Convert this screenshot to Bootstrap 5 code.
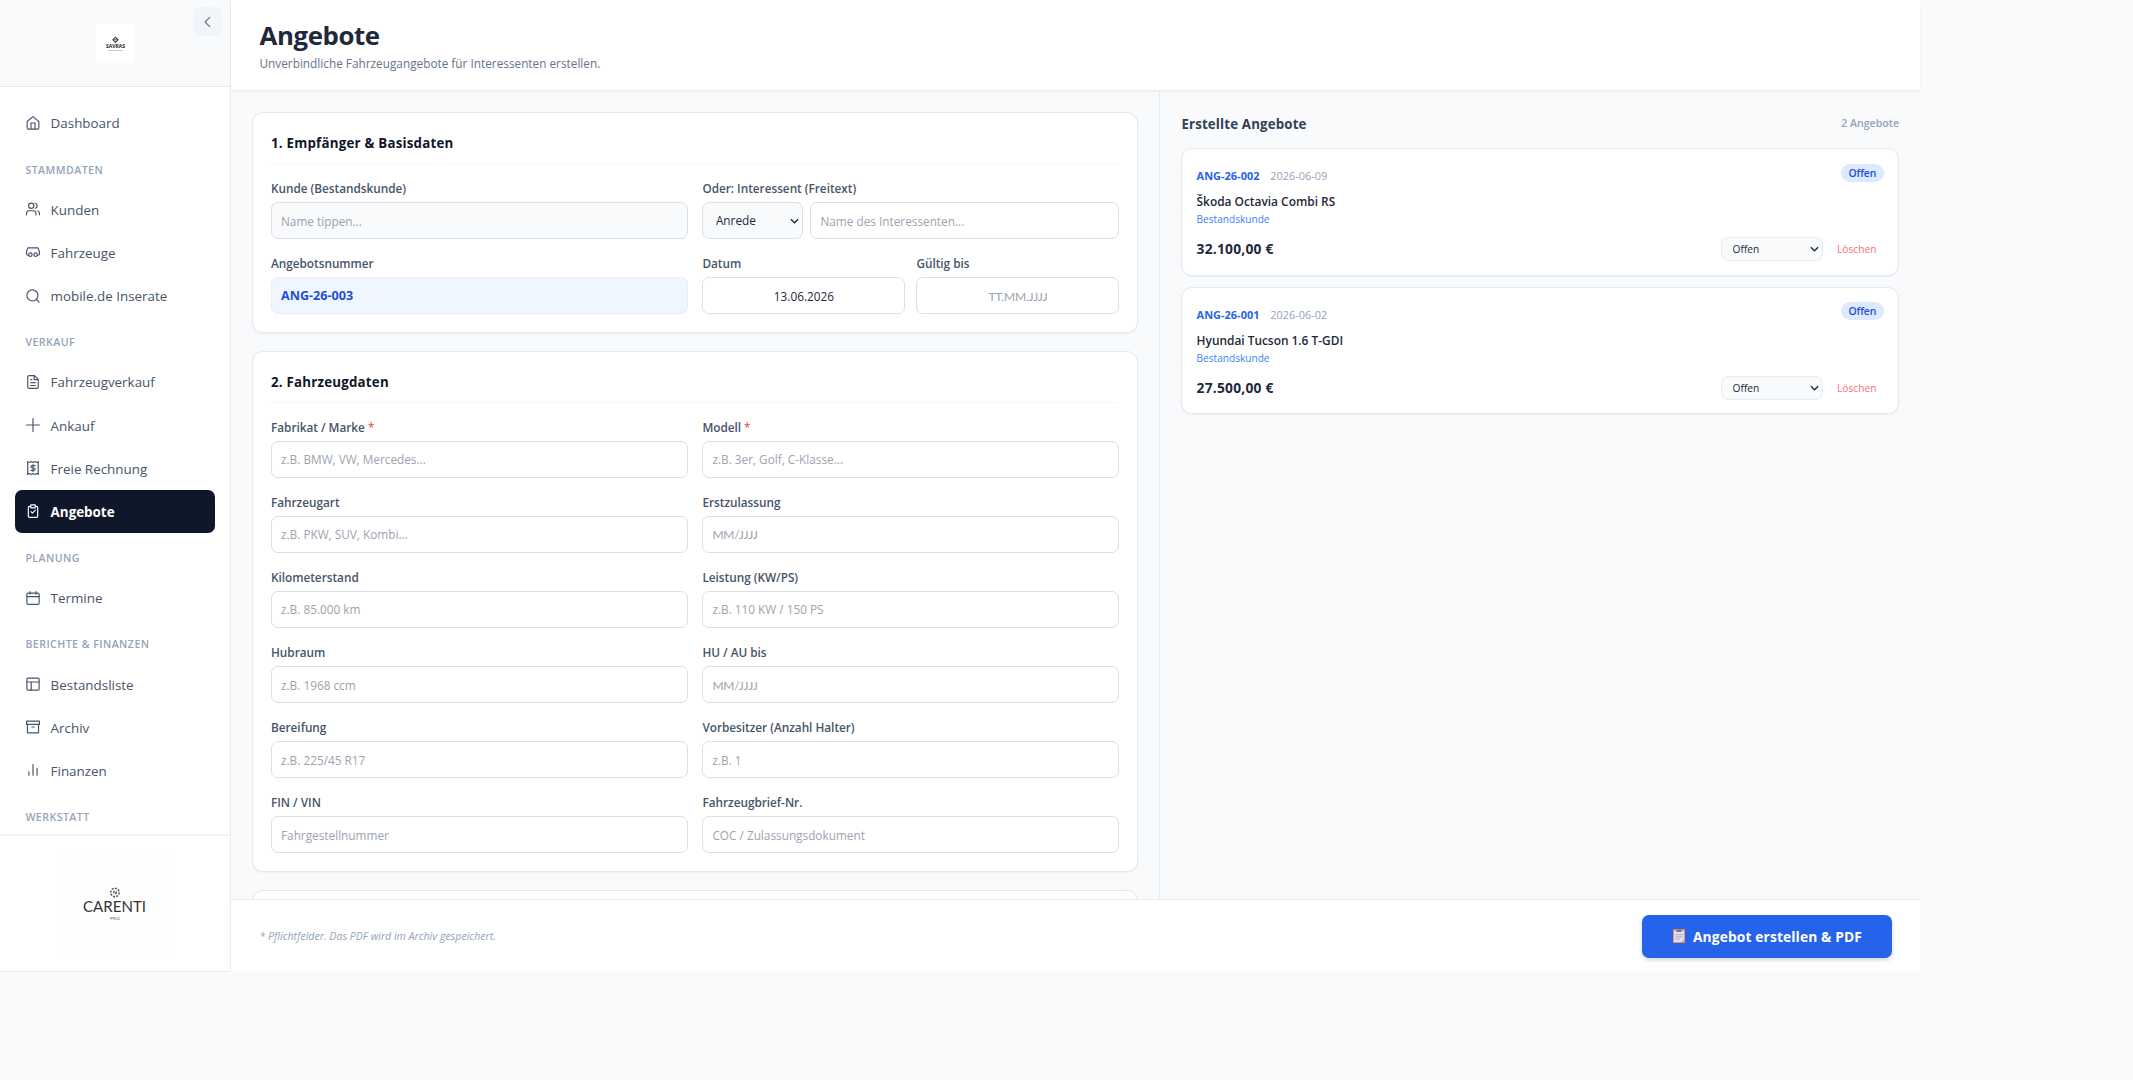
<!DOCTYPE html>
<html lang="de">
<head>
  <meta charset="UTF-8" />
  <meta name="viewport" content="width=device-width, initial-scale=1.0" />
  <title>Angebote</title>
  <link href="https://cdn.jsdelivr.net/npm/bootstrap@5.3.3/dist/css/bootstrap.min.css" rel="stylesheet">
  <style>
    body {
      font-family: 'Open Sans', 'Noto Sans', sans-serif;
      font-size: 12.6px;
      line-height: 18px;
      color: #1e293b;
      background: #f8fafc;
      overflow: hidden;
    }

    .app-shell { width: 1920px; height: 972px; }

    /* Sidebar */
    .side-panel { width: 231px; border-right: 1px solid #e8edf3; border-bottom: 1px solid #e8edf3; }
    .side-top { height: 87px; background: #f8fafc; border-bottom: 1px solid #e2e8f0; }
    .brand-tile { width: 39px; height: 39px; }
    .collapse-btn {
      top: 7px; right: 8px; width: 29px; height: 29px;
      background: #f1f5f9; border-radius: 7px; color: #64748b;
    }
    .side-nav { padding: 14.4px 14.6px 0 14.8px; overflow: hidden; }
    .side-item {
      height: 43.2px; padding: 1px 11px 0; gap: 10.8px;
      font-size: 13.4px; color: #475569; text-decoration: none; border-radius: 7px;
    }
    .side-item svg { width: 14px; height: 14px; margin-top: -1px; }
    .side-item.current { background: #0f172a; color: #fff; font-weight: 700; font-size: 13.4px; }
    .side-head {
      height: 43.1px; padding: 16px 10.6px 0;
      font-size: 10.6px; font-weight: 600; letter-spacing: .45px; color: #94a3b8;
    }
    .side-foot { height: 137px; border-top: 2px solid #f1f5f9; }
    .foot-logo { width: 108px; height: 108px; background: #fefefe; }
    .icon { fill: none; stroke: currentColor; stroke-width: 2; stroke-linecap: round; stroke-linejoin: round; flex: none; }

    /* Page header */
    .page-head { height: 91px; padding: 18px 28.5px 0; border-bottom: 1px solid #e8edf3; box-shadow: 0 1px 2px rgba(15, 23, 42, .05); z-index: 1; }
    .page-head h1 { font-size: 25.8px; line-height: 35px; font-weight: 700; letter-spacing: -.4px; }
    .page-head p { font-size: 11.8px; line-height: 20px; color: #64748b; }

    /* Form column */
    .form-col { width: 929px; padding: 21.4px 21px 0 21.4px; border-right: 1px solid #e8edf3; overflow: hidden; }
    .panel { background: #fff; border: 1px solid #e5eaf1; border-radius: 11px; box-shadow: 0 1px 2px rgba(15, 23, 42, .05); }
    .form-panel { padding: 17.6px 17.6px 17.2px; margin-bottom: 18.6px; }
    .panel-title { font-size: 13.3px; line-height: 24px; font-weight: 700; letter-spacing: .22px; color: #0f172a; padding-bottom: 8.4px; margin-bottom: 14.8px; border-bottom: 1px solid #f5f8fb; }
    .field-grid { display: grid; grid-template-columns: 1fr 1fr; gap: 15px 14.4px; }
    .field-grid label { display: block; font-size: 11.8px; line-height: 18px; font-weight: 600; letter-spacing: -.02px; color: #475569; margin-bottom: 4.6px; }
    .field-grid .form-control, .field-grid .form-select {
      height: 37.5px; padding: 0 9px; font-size: 11.8px;
      border: 1px solid #d9e0ea; border-radius: 7px; color: #1e293b;
    }
    .form-control::placeholder { color: #9ca3af; opacity: 1; }
    .date-hint::placeholder { font-family: Lato, sans-serif; font-size: 12px; letter-spacing: -.2px; }
    .bg-soft, .field-grid .bg-soft { background-color: #f8fafc; }
    .field-grid .offer-no { background: #eff6ff; border-color: #e3edfb; color: #1d4ed8; font-weight: 700; font-size: 12.6px; }
    .field-grid .form-select, .state-select {
      background-image: url("data:image/svg+xml,%3csvg xmlns='http://www.w3.org/2000/svg' viewBox='0 0 10 6'%3e%3cpath fill='none' stroke='%231e293b' stroke-width='1.5' d='M1 1l4 4 4-4'/%3e%3c/svg%3e");
      background-size: 8.5px 5.5px; background-repeat: no-repeat; background-position: right 3.5px center;
    }
    .field-grid .salutation { width: 101px; flex: none; padding-left: 12.5px; }
    .field-pair { gap: 7px; }
    .date-pair { gap: 11px; }
    .req { color: #ef4444; font-weight: 400; }

    /* Offer list */
    .list-col { padding: 21px 21px 0 21.4px; }
    .list-title { font-size: 13.3px; font-weight: 700; letter-spacing: .15px; color: #334155; line-height: 24px; }
    .list-count { font-size: 10.6px; font-weight: 600; color: #94a3b8; margin-top: -2px; }
    .offer { height: 127.5px; padding: 14.2px 14.4px 0 14.2px; margin-bottom: 11.3px; }
    .offer-id { font-size: 10.9px; font-weight: 700; letter-spacing: .05px; color: #2563eb; }
    .offer-date { font-size: 10.9px; color: #94a3b8; padding-left: 10.8px; }
    .offer-name { font-size: 11.9px; font-weight: 600; letter-spacing: 0; line-height: 20px; padding-top: 5.8px; }
    .offer-kind { font-size: 10.1px; line-height: 16px; color: #3b82f6; }
    .offer-price { font-size: 13.8px; font-weight: 700; letter-spacing: .22px; }
    .offer-foot { margin-top: 10px; }
    .state-pill { font-size: 10.4px; font-weight: 600; letter-spacing: -.1px; line-height: 19px; height: 18px; padding: 0 7.4px; background: #dbeafe; color: #1d4ed8; border-radius: 9px; margin-top: .5px; }
    .state-select { width: 102.5px; height: 24px; padding: 0 11px; font-size: 10.2px; line-height: 22px; border: 1px solid #e8edf3; border-radius: 7px; appearance: none; color: #1e293b; background-color: #f8fafc; }
    .remove-link { font-size: 10.2px; color: #f87171; text-decoration: none; padding: 0 7.2px 0 14px; }

    /* Footer bar */
    .page-foot { height: 73px; padding: 0 28.5px; border-top: 1px solid #e8edf3; }
    .page-foot em { font-size: 10.6px; color: #94a3b8; }
    .btn-offer {
      width: 250px; height: 43px; padding: 2px 0 0 2px; gap: 8px;
      font-size: 13.8px; font-weight: 700; letter-spacing: .12px; color: #fff; background: #2563eb;
      border: 0; border-radius: 7px; box-shadow: 0 2px 4px rgba(15, 23, 42, .18);
    }
    .btn-offer svg { margin-top: -2px; }
  </style>
</head>
<body>

  <div class="app-shell d-flex">
    <aside class="side-panel bg-white d-flex flex-column flex-shrink-0">
      <div class="side-top position-relative d-flex align-items-center justify-content-center flex-shrink-0">
        <svg class="brand-tile bg-white" viewBox="0 0 39 39">
          <g fill="none" stroke="#444" stroke-width="1.1"><path d="M19.5 13.2l2.6 2.6-2.6 2.6-2.6-2.6z"/><path d="M18.2 15.8h2.6"/></g>
          <text x="19.5" y="24" text-anchor="middle" font-size="4.6" font-weight="700" textLength="19" lengthAdjust="spacingAndGlyphs" fill="#222">SAVRAS</text>
          <path d="M12 26.5h15" stroke="#bbb" stroke-width=".8"/>
        </svg>
        <button class="collapse-btn btn p-0 border-0 position-absolute d-flex align-items-center justify-content-center" type="button">
          <svg class="icon" width="14" height="14" viewBox="0 0 24 24"><path d="M15 20l-8-8 8-8"/></svg>
        </button>
      </div>

      <nav class="side-nav flex-grow-1">
        <a href="#" class="side-item d-flex align-items-center">
          <svg class="icon" viewBox="0 0 24 24"><path d="M2 9.500L12 1l10 8.500V20.500a2 2 0 0 1-2 2H4a2 2 0 0 1-2-2zM8.500 22V12h7v10"/></svg>
          Dashboard</a>
        <div class="side-head">STAMMDATEN</div>
        <a href="#" class="side-item d-flex align-items-center">
          <svg class="icon" viewBox="0 0 24 24"><circle cx="9" cy="6.5" r="4.5"/><path d="M1 22v-3a4 4 0 0 1 4-4h8a4 4 0 0 1 4 4v3M16 2.2a4.5 4.5 0 0 1 0 8.6M23 22v-3a4 4 0 0 0-3-3.9"/></svg>
          Kunden</a>
        <a href="#" class="side-item d-flex align-items-center">
          <svg class="icon" viewBox="0 0 24 24"><path d="M4 17.500H3a2 2 0 0 1-2-2V11l2-6h17.500L23 11v4.500a2 2 0 0 1-2 2h-1"/><circle cx="7.500" cy="16.500" r="3"/><circle cx="16.500" cy="16.500" r="3"/></svg>
          Fahrzeuge</a>
        <a href="#" class="side-item d-flex align-items-center">
          <svg class="icon" viewBox="0 0 24 24"><circle cx="11" cy="11" r="9.500"/><path d="M22.500 22.500L18 18"/></svg>
          mobile.de Inserate</a>
        <div class="side-head">VERKAUF</div>
        <a href="#" class="side-item d-flex align-items-center">
          <svg class="icon" viewBox="0 0 24 24"><path d="M14.500 1H5a2 2 0 0 0-2 2v18a2 2 0 0 0 2 2h14a2 2 0 0 0 2-2V7.500zM14 1v7h7M8 8h2M8 13h8M8 18h8"/></svg>
          Fahrzeugverkauf</a>
        <a href="#" class="side-item d-flex align-items-center">
          <svg class="icon" viewBox="0 0 24 24"><path d="M12 1v22M1 12h22"/></svg>
          Ankauf</a>
        <a href="#" class="side-item d-flex align-items-center">
          <svg class="icon" viewBox="0 0 24 24"><path d="M3 1l3 1.500L9 1l3 1.500L15 1l3 1.500L21 1v22l-3-1.500-3 1.500-3-1.500L9 23l-3-1.500L3 23z"/><path d="M15.500 8H10.500a2 2 0 0 0 0 4h3a2 2 0 0 1 0 4H8.500M12 6v12"/></svg>
          Freie Rechnung</a>
        <a href="#" class="side-item current d-flex align-items-center">
          <svg class="icon" viewBox="0 0 24 24"><path d="M8 4H6a2 2 0 0 0-2 2v15a2 2 0 0 0 2 2h12a2 2 0 0 0 2-2V6a2 2 0 0 0-2-2h-2"/><rect x="8" y="1.500" width="8" height="5" rx="1"/><path d="M8.500 13l2.500 2.500 5-5"/></svg>
          Angebote</a>
        <div class="side-head">PLANUNG</div>
        <a href="#" class="side-item d-flex align-items-center">
          <svg class="icon" viewBox="0 0 24 24"><rect x="1.500" y="3.500" width="21" height="19.500" rx="2"/><path d="M7 1v4.500M17 1v4.500M1.500 9.500h21"/></svg>
          Termine</a>
        <div class="side-head">BERICHTE &amp; FINANZEN</div>
        <a href="#" class="side-item d-flex align-items-center">
          <svg class="icon" viewBox="0 0 24 24"><rect x="1.500" y="2" width="21" height="20.500" rx="2"/><path d="M1.500 8.500h21M9 8.500v14"/></svg>
          Bestandsliste</a>
        <a href="#" class="side-item d-flex align-items-center">
          <svg class="icon" viewBox="0 0 24 24"><rect x="1" y="2" width="22" height="5.500"/><path d="M2.500 7.500v14.500h19V7.500M10 12h4"/></svg>
          Archiv</a>
        <a href="#" class="side-item d-flex align-items-center">
          <svg class="icon" viewBox="0 0 24 24"><path d="M5 21v-6M12 21V2.500M19 21V9"/></svg>
          Finanzen</a>
        <div class="side-head">WERKSTATT</div>
      </nav>

      <div class="side-foot d-flex align-items-center justify-content-center flex-shrink-0">
        <svg class="foot-logo" viewBox="0 0 108 108">
          <g fill="none" stroke="#555" stroke-width="1.500" stroke-dasharray="2 1.200"><circle cx="54" cy="42.500" r="4.200"/><circle cx="54" cy="42.500" r="1.300"/></g>
          <text x="53.500" y="61.500" text-anchor="middle" font-family="Lato" font-size="15" textLength="63" lengthAdjust="spacingAndGlyphs" fill="#333">CARENTI</text>
          <text x="54" y="69.500" text-anchor="middle" font-family="Lato" font-size="4.600" textLength="10" fill="#555">PRO</text>
        </svg>
      </div>
    </aside>

    <main class="d-flex flex-column flex-grow-1">
      <header class="page-head bg-white position-relative flex-shrink-0">
        <h1 class="m-0">Angebote</h1>
        <p class="m-0">Unverbindliche Fahrzeugangebote für Interessenten erstellen.</p>
      </header>

      <div class="d-flex flex-grow-1 overflow-hidden">
        <form class="form-col flex-shrink-0">
          <section class="panel form-panel">
            <h2 class="panel-title">1. Empfänger &amp; Basisdaten</h2>
            <div class="field-grid">
              <div><label>Kunde (Bestandskunde)</label><input class="form-control bg-soft" placeholder="Name tippen..."></div>
              <div>
                <label>Oder: Interessent (Freitext)</label>
                <div class="field-pair d-flex">
                  <select class="form-select bg-soft salutation"><option>Anrede</option><option>Herr</option><option>Frau</option></select>
                  <input class="form-control" placeholder="Name des Interessenten...">
                </div>
              </div>
              <div><label>Angebotsnummer</label><input class="form-control offer-no" value="ANG-26-003" readonly></div>
              <div class="date-pair d-flex">
                <div class="flex-fill"><label>Datum</label><input class="form-control text-center" value="13.06.2026"></div>
                <div class="flex-fill"><label>Gültig bis</label><input class="form-control date-hint text-center" placeholder="TT.MM.JJJJ"></div>
              </div>
            </div>
          </section>

          <section class="panel form-panel">
            <h2 class="panel-title">2. Fahrzeugdaten</h2>
            <div class="field-grid">
              <div><label>Fabrikat / Marke <span class="req">*</span></label><input class="form-control" placeholder="z.B. BMW, VW, Mercedes..."></div>
              <div><label>Modell <span class="req">*</span></label><input class="form-control" placeholder="z.B. 3er, Golf, C-Klasse..."></div>
              <div><label>Fahrzeugart</label><input class="form-control" placeholder="z.B. PKW, SUV, Kombi..."></div>
              <div><label>Erstzulassung</label><input class="form-control date-hint" placeholder="MM/JJJJ"></div>
              <div><label>Kilometerstand</label><input class="form-control" placeholder="z.B. 85.000 km"></div>
              <div><label>Leistung (KW/PS)</label><input class="form-control" placeholder="z.B. 110 KW / 150 PS"></div>
              <div><label>Hubraum</label><input class="form-control" placeholder="z.B. 1968 ccm"></div>
              <div><label>HU / AU bis</label><input class="form-control date-hint" placeholder="MM/JJJJ"></div>
              <div><label>Bereifung</label><input class="form-control" placeholder="z.B. 225/45 R17"></div>
              <div><label>Vorbesitzer (Anzahl Halter)</label><input class="form-control" placeholder="z.B. 1"></div>
              <div><label>FIN / VIN</label><input class="form-control" placeholder="Fahrgestellnummer"></div>
              <div><label>Fahrzeugbrief-Nr.</label><input class="form-control" placeholder="COC / Zulassungsdokument"></div>
            </div>
          </section>

          <section class="panel form-panel"></section>
        </form>

        <section class="list-col flex-grow-1">
          <div class="d-flex justify-content-between align-items-center mb-2 pb-1">
            <span class="list-title">Erstellte Angebote</span>
            <span class="list-count">2 Angebote</span>
          </div>

          <article class="panel offer">
            <div class="d-flex justify-content-between">
              <div class="pt-1"><span class="offer-id">ANG-26-002</span><span class="offer-date">2026-06-09</span></div>
              <span class="state-pill">Offen</span>
            </div>
            <div class="offer-name">Škoda Octavia Combi RS</div>
            <div class="offer-kind">Bestandskunde</div>
            <div class="offer-foot d-flex align-items-center">
              <span class="offer-price me-auto">32.100,00 €</span>
              <select class="state-select"><option>Offen</option></select>
              <a href="#" class="remove-link">Löschen</a>
            </div>
          </article>

          <article class="panel offer">
            <div class="d-flex justify-content-between">
              <div class="pt-1"><span class="offer-id">ANG-26-001</span><span class="offer-date">2026-06-02</span></div>
              <span class="state-pill">Offen</span>
            </div>
            <div class="offer-name">Hyundai Tucson 1.6 T-GDI</div>
            <div class="offer-kind">Bestandskunde</div>
            <div class="offer-foot d-flex align-items-center">
              <span class="offer-price me-auto">27.500,00 €</span>
              <select class="state-select"><option>Offen</option></select>
              <a href="#" class="remove-link">Löschen</a>
            </div>
          </article>
        </section>
      </div>

      <footer class="page-foot bg-white d-flex align-items-center justify-content-between flex-shrink-0">
        <em>* Pflichtfelder. Das PDF wird im Archiv gespeichert.</em>
        <button class="btn btn-offer d-flex align-items-center justify-content-center" type="button">
          <svg width="12" height="14" viewBox="0 0 12 14">
            <rect width="12" height="14" rx=".8" fill="#e0956a"/>
            <path d="M1 2h10v8.500L8.500 13H1z" fill="#e5ddf0"/>
            <rect x="3.500" y=".5" width="5" height="2.500" fill="#7d7484"/>
            <path d="M2.300 5.700h7.400M2.300 7.900h7.400M2.300 10.100h4.500" stroke="#b3a8c4" stroke-width="1"/>
          </svg>
          Angebot erstellen &amp; PDF
        </button>
      </footer>
    </main>
  </div>

  <script src="https://cdn.jsdelivr.net/npm/bootstrap@5.3.3/dist/js/bootstrap.bundle.min.js"></script>
</body>
</html>
